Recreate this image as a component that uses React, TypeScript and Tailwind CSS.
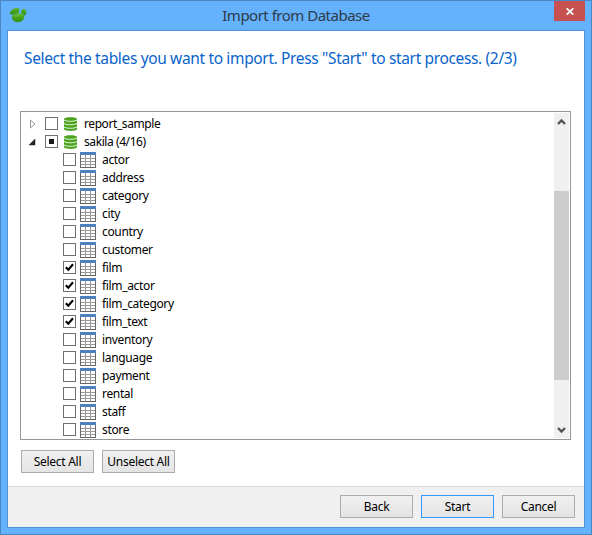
import React from 'react';

const tables = ['actor', 'address', 'category', 'city', 'country', 'customer', 'film', 'film_actor', 'film_category', 'film_text', 'inventory', 'language', 'payment', 'rental', 'staff', 'store'];
const selected = new Set(['film', 'film_actor', 'film_category', 'film_text']);

type CheckState = 'off' | 'on' | 'mixed';

function AppLogo() {
  return (
    <svg width="18" height="16" viewBox="0 0 18 16" className="block">
      <defs>
        <linearGradient id="leaf" x1="0" y1="0" x2="0" y2="1">
          <stop offset="0" stopColor="#5cb528" />
          <stop offset="1" stopColor="#308f0c" />
        </linearGradient>
      </defs>
      <path d="M1 6C1.200 3 5 .8 9 1C10.500 1.400 10.600 5 9.400 5.700C7.200 5.900 5.400 7.900 3 7.600C1.500 7.400 .9 7 1 6Z" fill="url(#leaf)" />
      <path d="M14.200 2C16 1.600 17.500 3.500 17.400 5.600C17.200 7.600 16 8.900 15.200 8.300C14.400 6.800 12.200 6.500 12 5C11.800 3.600 12.900 2.300 14.200 2Z" fill="url(#leaf)" />
      <path d="M3 10.300C3.400 7.600 6.500 6.200 10 6.200C13.200 6.200 15.500 7.700 15.300 10C15 13 12 15.200 8.700 15.200C5.300 15.200 2.700 13 3 10.300Z" fill="url(#leaf)" />
      <path d="M4.300 10.200C6 7.300 9.500 6.600 13 7.300C11 10 8 9.500 4.300 10.200Z" fill="#86c95b" opacity=".35" />
    </svg>
  );
}

function CheckBox({ state }: { state: CheckState }) {
  return (
    <span className="-mt-px flex size-[13px] shrink-0 items-center justify-center border border-[#707070] bg-white">
      {state === 'mixed' && <span className="size-[5px] bg-[#1a1a1a]" />}
      {state === 'on' && (
        <svg width="11" height="11" viewBox="0 0 11 11" className="block">
          <path d="M1.800 5.200L4.300 7.800L9 2.200" fill="none" stroke="#000" strokeWidth="2.100" />
        </svg>
      )}
    </span>
  );
}

function DatabaseIcon() {
  return (
    <svg width="13" height="14" viewBox="0 0 12 14" preserveAspectRatio="none" className="-mr-px block shrink-0">
      <path d="M0 2C0 -.3 12 -.3 12 2V12C12 14.500 0 14.500 0 12Z" fill="#4ca31d" />
      <path d="M0 2.900C2 4.700 10 4.700 12 2.900M0 6.400C2 8.200 10 8.200 12 6.400M0 9.900C2 11.700 10 11.700 12 9.900" fill="none" stroke="#e4f3dc" strokeWidth="1" />
    </svg>
  );
}

function TableIcon() {
  return (
    <svg width="16" height="16" viewBox="0 0 16 16" shapeRendering="crispEdges" className="block shrink-0">
      <rect width="16" height="16" fill="#666" />
      <rect x="1" y="3" width="14" height="12" fill="#fff" />
      <path d="M1 6.500H15M1 9.500H15M1 12.500H15M5.500 3V15M10.500 3V15" stroke="#989898" />
      <rect width="16" height="3" fill="#4a80bd" />
    </svg>
  );
}

function DatabaseRow({ name, state, open }: { name: string; state: CheckState; open?: boolean }) {
  return (
    <div className="flex h-[18px] items-center pl-2">
      <svg width="8" height="10" viewBox="0 0 8 10" className="mr-2 block shrink-0">
        {open ? <path d="M6 2V8H0Z" fill="#262626" stroke="#262626" strokeWidth=".5" /> : <path d="M1.500 1L6 5L1.500 9Z" fill="#fff" stroke="#999" />}
      </svg>
      <CheckBox state={state} />
      <span className="ml-1.5"><DatabaseIcon /></span>
      <span className="ml-2 text-[12px] leading-[18px] tracking-[-0.42px]">{name}</span>
    </div>
  );
}

function TableRow({ name }: { name: string }) {
  return (
    <div className="flex h-[18px] items-center pl-[42px]">
      <CheckBox state={selected.has(name) ? 'on' : 'off'} />
      <span className="ml-1"><TableIcon /></span>
      <span className="ml-1.5 text-[12px] leading-[18px] tracking-[-0.34px]">{name}</span>
    </div>
  );
}

function Button({ label, border = 'border-[#acacac]' }: { label: string; border?: string }) {
  return (
    <button className={`h-[23px] w-[73px] whitespace-nowrap border bg-linear-to-b from-[#f0f0f0] to-[#e4e4e4] text-[12px] leading-[20px] tracking-[-0.28px] ${border}`}>
      {label}
    </button>
  );
}

function ScrollChevron({ up }: { up?: boolean }) {
  return (
    <svg width="15" height="17" viewBox="0 0 15 17" className="block">
      <path d={up ? 'M4 11L7.500 7.500L11 11' : 'M4 7L7.500 10.500L11 7'} fill="none" stroke="#555" strokeWidth="2.400" />
    </svg>
  );
}

export default function App() {
  return (
    <div className="flex h-[535px] w-[592px] flex-col border border-[#4a86c2] bg-[#64b1fd] px-1.5 pb-1.5 font-['Noto_Sans','Open_Sans',sans-serif] text-black">
      <header className="flex h-[29px] shrink-0 items-start">
        <div className="w-[31px] pl-[2px] pt-[6px]"><AppLogo /></div>
        <h1 className="flex-1 pt-[2px] text-center text-[15px] leading-[24px] tracking-[-0.5px] text-[#2e3b48]">Import from Database</h1>
        <button aria-label="Close" className="flex h-5 w-[31px] items-center justify-center bg-[#c75050]">
          <svg width="8" height="7" viewBox="0 0 8 7"><path d="M.7 .3L7.300 6.700M7.300 .3L.7 6.700" stroke="#fff" strokeWidth="1.700" /></svg>
        </button>
      </header>
      <main className="flex flex-1 flex-col border border-[#4f93d6] bg-white">
        <h2 className="h-20 whitespace-nowrap pl-4 pt-[15px] text-[15.5px] leading-[24px] tracking-[-0.355px] text-[#0a64cc]">
          Select the tables you want to import. Press "Start" to start process. (2/3)
        </h2>
        <section className="ml-3 flex h-[329px] w-[551px] justify-between border border-[#969696] pr-px">
          <div className="pt-[3px]">
            <DatabaseRow name="report_sample" state="off" />
            <DatabaseRow name="sakila (4/16)" state="mixed" open />
            {tables.map((t) => <TableRow key={t} name={t} />)}
          </div>
          <div className="my-px flex w-[15px] flex-col bg-[#f0f0f0]">
            <ScrollChevron up />
            <div className="mt-[61px] h-[189px] bg-[#cdcdcd]" />
            <div className="mt-auto"><ScrollChevron /></div>
          </div>
        </section>
        <div className="flex gap-2 pl-[13px] pt-[10px]">
          <Button label="Select All" />
          <Button label="Unselect All" />
        </div>
        <footer className="mt-auto flex h-[41px] justify-end gap-2 border-t border-[#d8d8d8] bg-[#f0f0f0] pr-[9px] pt-2">
          <Button label="Back" />
          <Button label="Start" border="border-[#3399ff]" />
          <Button label="Cancel" />
        </footer>
      </main>
    </div>
  );
}
